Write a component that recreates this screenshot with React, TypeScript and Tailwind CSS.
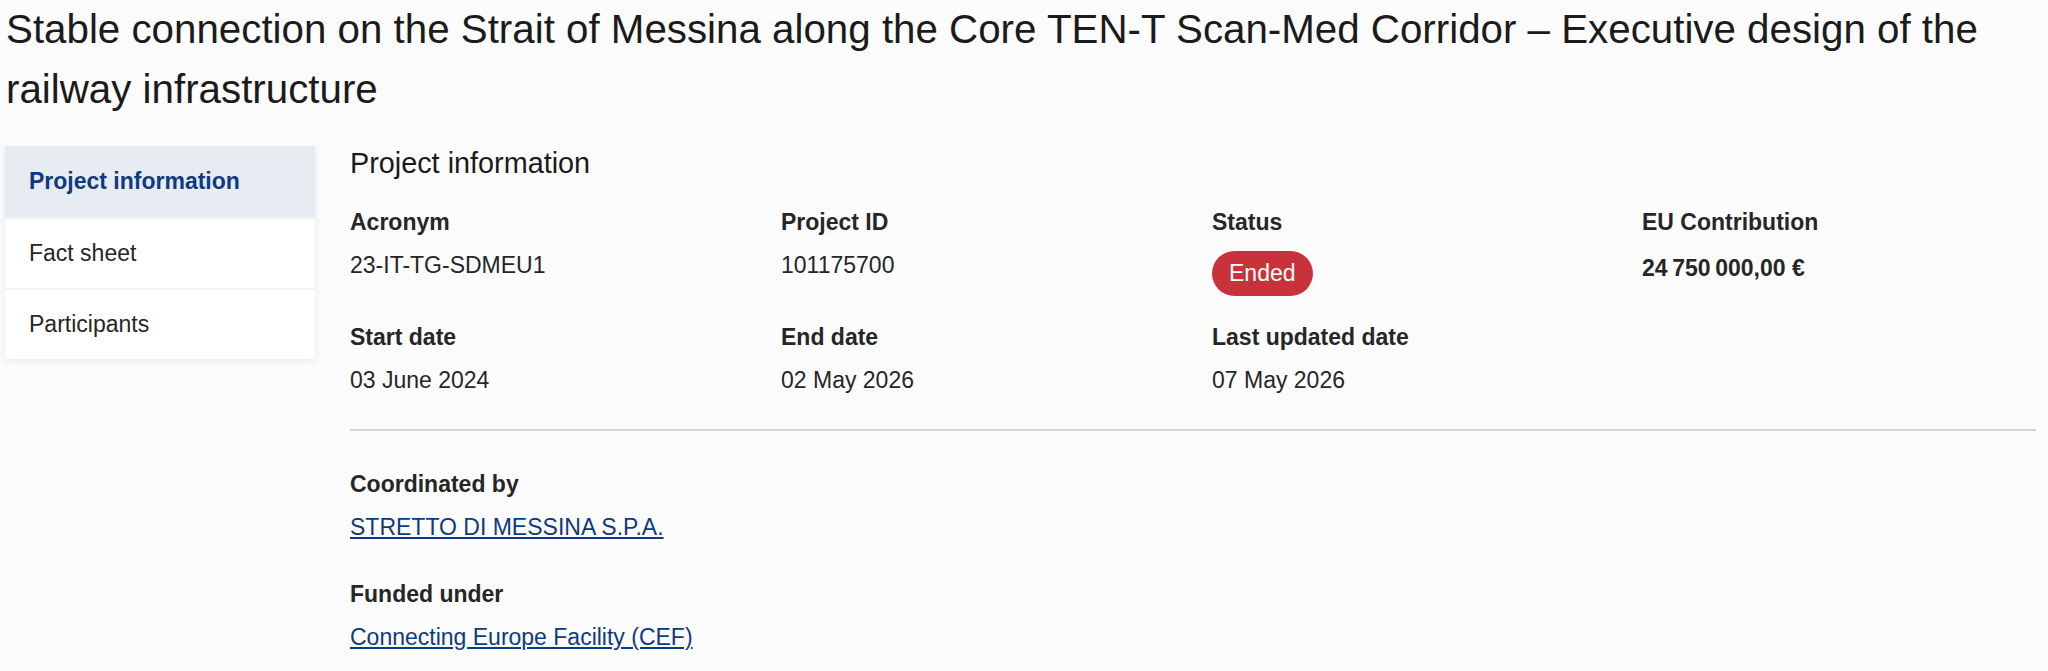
import React from "react";

type Field = {
  label: string;
  value?: string;
  badge?: string;
  bold?: boolean;
};

const rowOne: Field[] = [
  { label: "Acronym", value: "23-IT-TG-SDMEU1" },
  { label: "Project ID", value: "101175700" },
  { label: "Status", badge: "Ended" },
  { label: "EU Contribution", value: "24\u202F750\u202F000,00 €", bold: true },
];

const rowTwo: Field[] = [
  { label: "Start date", value: "03 June 2024" },
  { label: "End date", value: "02 May 2026" },
  { label: "Last updated date", value: "07 May 2026" },
];

const navItems = ["Project information", "Fact sheet", "Participants"];

function Cell({ field }: { field: Field }) {
  return (
    <div>
      <p className="font-bold text-[23px] leading-[32px] text-[#262626]">{field.label}</p>
      {field.badge ? (
        <span className="inline-flex items-center h-[45px] mt-[13px] px-[17px] rounded-full bg-[#c8323a] text-white text-[23px]">
          {field.badge}
        </span>
      ) : (
        <p
          className={`text-[23px] leading-[32px] text-[#262626] ${
            field.bold ? "font-bold mt-[14px]" : "mt-[11px]"
          }`}
        >
          {field.value}
        </p>
      )}
    </div>
  );
}

export default function App() {
  return (
    <div className="min-h-screen bg-[#fcfcfd] text-[#1d1d1d]" style={{ fontFamily: '"Liberation Sans", Arial, sans-serif' }}>
      <h1 className="pl-[6px] pr-4 text-[40.3px] leading-[60px] font-normal text-[#1b1b1b]">
        Stable connection on the Strait of Messina along the Core TEN-T Scan-Med Corridor – Executive design of the
        railway infrastructure
      </h1>

      <div className="flex mt-[26px]">
        {/* side navigation */}
        <nav className="ml-[5px] w-[310px] self-start bg-white shadow-[0_2px_8px_rgba(0,0,0,0.08)]">
          {navItems.map((item, i) => (
            <div
              key={item}
              className={`h-[71px] flex items-center pl-[24px] text-[23px] ${
                i === 0 ? "bg-[#e7ecf3] text-[#0e3a80] font-bold" : "text-[#262626]"
              } ${i > 0 ? "border-t-2 border-[#f0f1f3]" : ""}`}
            >
              {item}
            </div>
          ))}
        </nav>

        {/* content */}
        <section className="ml-[35px] flex-1 pr-[12px]">
          <h2 className="text-[28.8px] leading-[34px] text-[#1b1b1b]">Project information</h2>

          <div className="grid grid-cols-[431px_431px_430px_1fr] mt-[26px]">
            {rowOne.map((f) => (
              <Cell key={f.label} field={f} />
            ))}
          </div>

          <div className="grid grid-cols-[431px_431px_430px_1fr] mt-[25px]">
            {rowTwo.map((f) => (
              <Cell key={f.label} field={f} />
            ))}
          </div>

          <hr className="mt-[33px] border-0 h-[2px] bg-[#d4d4d6]" />

          <div className="mt-[37px]">
            <p className="font-bold text-[23px] leading-[32px] text-[#262626]">Coordinated by</p>
            <a href="#" className="inline-block mt-[11px] text-[23px] leading-[32px] text-[#0e3a80] underline">
              STRETTO DI MESSINA S.P.A.
            </a>
          </div>

          <div className="mt-[35px]">
            <p className="font-bold text-[23px] leading-[32px] text-[#262626]">Funded under</p>
            <a href="#" className="inline-block mt-[11px] text-[23px] leading-[32px] text-[#0e3a80] underline">
              Connecting Europe Facility (CEF)
            </a>
          </div>
        </section>
      </div>
    </div>
  );
}
